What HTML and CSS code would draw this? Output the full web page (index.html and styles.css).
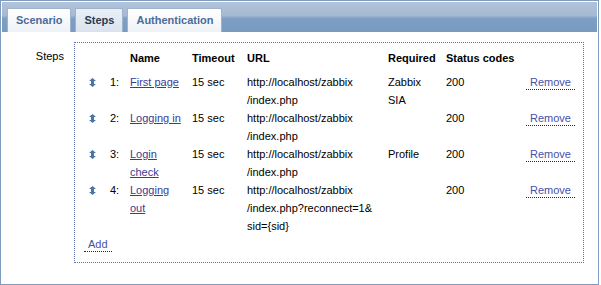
FILE: index.html
```html
<!DOCTYPE html>
<html lang="en">
<head>
  <meta charset="UTF-8" />
  <title>Web scenario steps</title>
  <link rel="stylesheet" href="styles.css">
</head>
<body>

<div class="frame">
  <ul class="tabs">
    <li class="tabs__item">Scenario</li>
    <li class="tabs__item tabs__item--active">Steps</li>
    <li class="tabs__item">Authentication</li>
  </ul>

  <div class="form-row">
    <div class="form-row__label">Steps</div>
    <div class="steps">
      <table class="steps__table">
        <colgroup>
          <col style="width: 20px">
          <col style="width: 26px">
          <col style="width: 62px">
          <col style="width: 55px">
          <col style="width: 141px">
          <col style="width: 58px">
          <col style="width: 80px">
          <col>
        </colgroup>
        <thead>
          <tr>
            <th></th>
            <th></th>
            <th>Name</th>
            <th>Timeout</th>
            <th>URL</th>
            <th>Required</th>
            <th>Status codes</th>
            <th></th>
          </tr>
        </thead>
        <tbody>
          <tr>
            <td class="steps__drag"><svg width="7" height="9" viewBox="0 0 7 9"><path d="M3.5 0L7 3H5V6H7L3.5 9L0 6H2V3H0Z"/></svg></td>
            <td class="steps__num">1:</td>
            <td><a href="#" class="link">First page</a></td>
            <td>15 sec</td>
            <td>http://localhost/zabbix<br>/index.php</td>
            <td>Zabbix<br>SIA</td>
            <td>200</td>
            <td class="steps__action"><a href="#" class="link-menu">Remove</a></td>
          </tr>
          <tr>
            <td class="steps__drag"><svg width="7" height="9" viewBox="0 0 7 9"><path d="M3.5 0L7 3H5V6H7L3.5 9L0 6H2V3H0Z"/></svg></td>
            <td class="steps__num">2:</td>
            <td><a href="#" class="link">Logging in</a></td>
            <td>15 sec</td>
            <td>http://localhost/zabbix<br>/index.php</td>
            <td></td>
            <td>200</td>
            <td class="steps__action"><a href="#" class="link-menu">Remove</a></td>
          </tr>
          <tr>
            <td class="steps__drag"><svg width="7" height="9" viewBox="0 0 7 9"><path d="M3.5 0L7 3H5V6H7L3.5 9L0 6H2V3H0Z"/></svg></td>
            <td class="steps__num">3:</td>
            <td><a href="#" class="link">Login<br>check</a></td>
            <td>15 sec</td>
            <td>http://localhost/zabbix<br>/index.php</td>
            <td>Profile</td>
            <td>200</td>
            <td class="steps__action"><a href="#" class="link-menu">Remove</a></td>
          </tr>
          <tr>
            <td class="steps__drag"><svg width="7" height="9" viewBox="0 0 7 9"><path d="M3.5 0L7 3H5V6H7L3.5 9L0 6H2V3H0Z"/></svg></td>
            <td class="steps__num">4:</td>
            <td><a href="#" class="link">Logging<br>out</a></td>
            <td>15 sec</td>
            <td>http://localhost/zabbix<br>/index.php?reconnect=1&amp;<br>sid={sid}</td>
            <td></td>
            <td>200</td>
            <td class="steps__action"><a href="#" class="link-menu">Remove</a></td>
          </tr>
        </tbody>
      </table>
      <div class="steps__add"><a href="#" class="link-menu">Add</a></div>
    </div>
  </div>
</div>

</body>
</html>
```

FILE: styles.css
```css
* {
  box-sizing: border-box;
}
body {
  margin: 0;
  font-family: "Liberation Sans", Arial, sans-serif;
  font-size: 11px;
  color: #000;
  background: #fff;
}

.frame {
  width: 599px;
  border: 1px solid #7f9bbd;
  padding-bottom: 21px;
}

.tabs {
  list-style: none;
  margin: 1px 1px 0;
  padding: 6px 0 0 5px;
  height: 30px;
  display: flex;
  gap: 4px;
  background: linear-gradient(#b1c3da, #a5bad3 45%, #7d9fc3 55%, #789bbf);
}
.tabs__item {
  height: 24px;
  line-height: 23px;
  padding: 0 8px;
  border: 1px solid #9fb3cc;
  border-bottom: none;
  border-radius: 2px 2px 0 0;
  background: linear-gradient(#ffffff, #eef2f7);
  color: #4b6b98;
  font-weight: bold;
}
.tabs__item--active {
  background: linear-gradient(#e9eff6, #d9e3ee);
  color: #2c3a4e;
}

.form-row {
  display: flex;
  padding-top: 10px;
}
.form-row__label {
  width: 73px;
  padding: 5px 10px 0 0;
  text-align: right;
  line-height: 18px;
}

.steps {
  width: 510px;
  height: 221px;
  border: 1px dotted #5d6fa6;
  padding: 6px 9px 9px;
}
.steps__table {
  width: 489px;
  table-layout: fixed;
  border-collapse: collapse;
}
.steps__table th,
.steps__table td {
  padding: 0;
  text-align: left;
  vertical-align: top;
  line-height: 18px;
}
.steps__table th {
  padding-bottom: 6px;
  font-weight: bold;
}
.steps__drag {
  padding-left: 5px !important;
}
.steps__drag svg {
  display: block;
  margin-top: 5px;
  fill: #4e74a4;
}
.steps__num {
  padding-left: 6px !important;
}
.steps__action {
  text-align: right !important;
}
.steps__add {
  line-height: 18px;
}

.link {
  color: #3b3b94;
  text-decoration: underline;
}
.link-menu {
  color: #4750a8;
  text-decoration: none;
  padding: 0 4px 1px;
  border-bottom: 1px dotted #1f1f8c;
}
```
